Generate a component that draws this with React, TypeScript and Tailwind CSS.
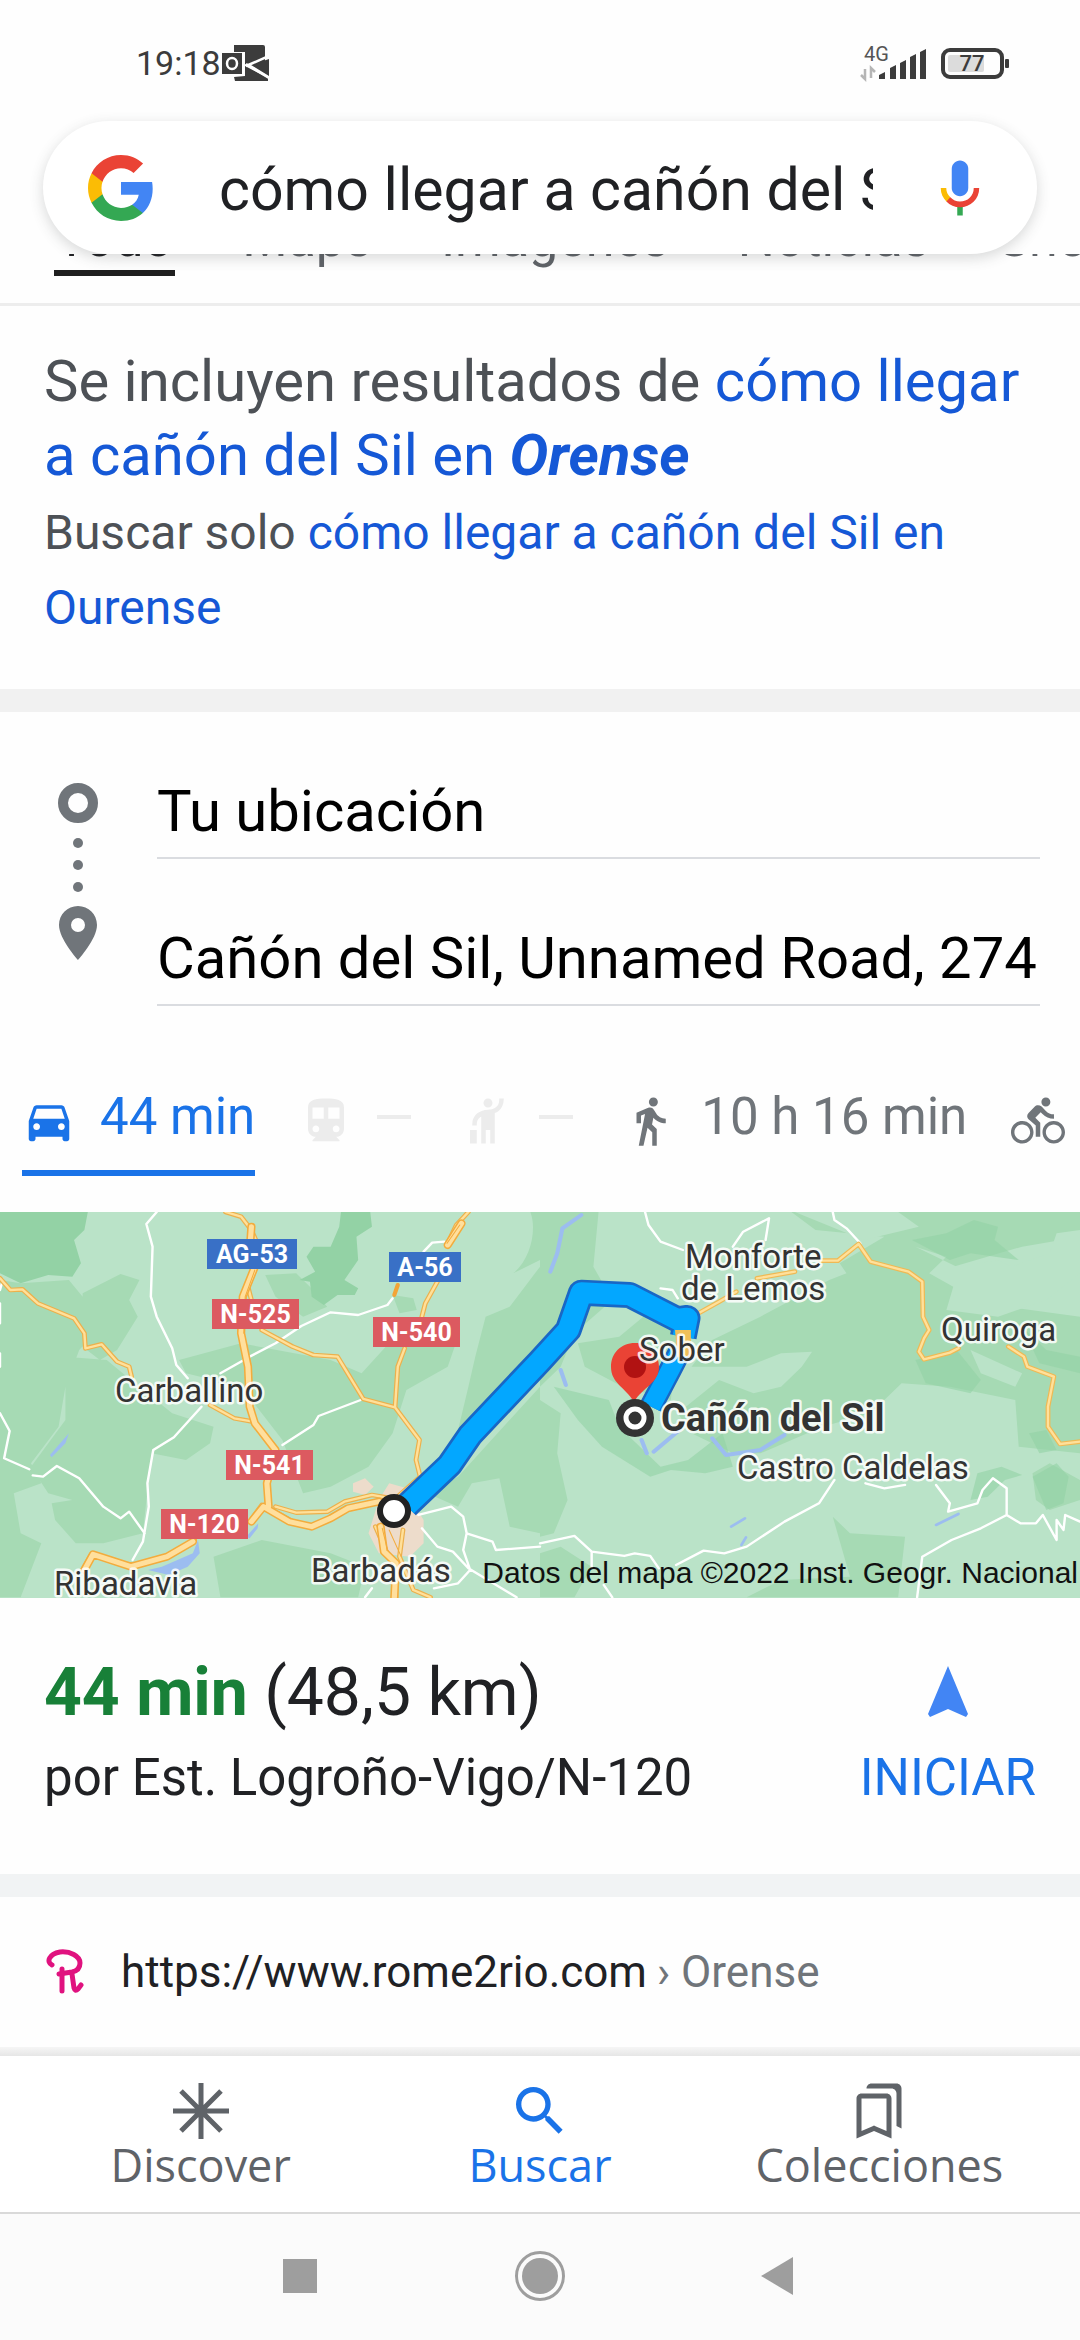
import type { ReactNode } from "react";
import {
  MdDirectionsBike,
  MdDirectionsCar,
  MdDirectionsTransit,
  MdDirectionsWalk,
  MdHail,
  MdOutlineBookmarks,
  MdSearch,
} from "react-icons/md";

function StatusBar() {
  return (
    <div className="flex h-[121px] items-center justify-between pt-1 pr-[70px] pl-[136px] text-[#3c3c3c]">
      <div className="flex items-center">
        <span className="text-[34px] leading-10">19:18</span>
        <svg className="h-[38px] w-[48px]" viewBox="0 0 48 38" aria-hidden="true">
          <path d="M13 1h29q2 0 2 2v17L26 21l-2-1V8H13z" fill="#3c3c3c" />
          <path d="M1 9h20v21H1z" fill="#3c3c3c" />
          <ellipse cx="11" cy="19.500" rx="5" ry="5.500" fill="none" stroke="#fff" strokeWidth="2.500" />
          <path d="M30 21l18-6v17z" fill="#3c3c3c" />
          <path d="M13 33l11-1V22l23 12v3H14z" fill="#3c3c3c" />
          <path d="M25 22l23-10M25 20l23 14" stroke="#fff" strokeWidth="2.500" />
          <path d="M22 8v23H13" fill="none" stroke="#fff" strokeWidth="2" />
        </svg>
      </div>
      <svg className="h-[40px] w-[150px]" viewBox="0 0 150 40" aria-label="4G, batería 77">
        <text x="4" y="18" fontSize="20" fill="#555" fontFamily="Roboto, sans-serif">4G</text>
        <path d="M5 26v10l-4-4M11 35V25l4 4" fill="none" stroke="#b5b5b5" strokeWidth="2.5" />
        <path d="M19 36v-4l6-3v7zM30 36V25l6-3v14zM40 36V20l6-3v19zM50 36V14l6-3v25zM60 36V9l6-3v30z" fill="#3c3c3c" />
        <rect x="83" y="7" width="59" height="27" rx="7" fill="none" stroke="#3c3c3c" strokeWidth="4" />
        <rect x="88" y="12" width="36" height="17" rx="2" fill="#dcdcdc" />
        <rect x="145" y="16" width="4" height="9" rx="1" fill="#3c3c3c" />
        <text x="112" y="28" textAnchor="middle" fontSize="22" fontWeight="500" fill="#3c3c3c" fontFamily="Roboto, sans-serif">77</text>
      </svg>
    </div>
  );
}

function GoogleLogo() {
  return (
    <svg className="size-[72px] shrink-0" viewBox="0 0 24 24" aria-label="Google">
      <path fill="#4285f4" d="M22.56 12.25c0-.78-.07-1.53-.2-2.25H12v4.26h5.92c-.26 1.37-1.04 2.53-2.21 3.31v2.77h3.57c2.08-1.92 3.28-4.74 3.28-8.09z" />
      <path fill="#34a853" d="M12 23c2.97 0 5.46-.98 7.28-2.66l-3.57-2.77c-.98.66-2.23 1.06-3.71 1.06-2.86 0-5.29-1.93-6.16-4.53H2.18v2.84C3.99 20.53 7.7 23 12 23z" />
      <path fill="#fbbc05" d="M5.84 14.09c-.22-.66-.35-1.36-.35-2.09s.13-1.43.35-2.09V7.07H2.18C1.43 8.55 1 10.22 1 12s.43 3.45 1.18 4.93l3.66-2.84z" />
      <path fill="#ea4335" d="M12 5.38c1.62 0 3.06.56 4.21 1.64l3.15-3.15C17.45 2.09 14.97 1 12 1 7.7 1 3.99 3.47 2.18 7.07l3.66 2.84c.87-2.6 3.3-4.53 6.16-4.53z" />
    </svg>
  );
}

function MicIcon() {
  return (
    <svg className="size-[66px]" viewBox="0 0 24 24" aria-hidden="true">
      <path fill="#4285f4" d="M12 15c1.66 0 3-1.31 3-2.97V5.01C15 3.35 13.66 2 12 2S9 3.34 9 5.01v7.02C9 13.69 10.34 15 12 15z" />
      <path fill="#34a853" d="M11 18.08h2V22h-2z" />
      <path fill="#fbbc05" d="M7.05 16.87C5.78 15.54 5 14.04 5 12h2c0 1.45.56 2.42 1.47 3.38v.32l-1.15 1.18z" />
      <path fill="#ea4335" d="M12 16.93a4.97 5.25 0 0 1-3.54-1.55l-1.41 1.49C8.31 18.21 10.07 19 12 19c3.87 0 6.99-2.92 6.99-7H17c0 2.92-2.24 4.93-5 4.93z" />
    </svg>
  );
}

function SearchBar() {
  return (
    <form
      className="mx-[43px] flex h-[133px] items-center rounded-full bg-white pr-[44px] pl-[42px] shadow-[0_4px_14px_rgba(60,64,67,0.2)]"
      onSubmit={(e) => e.preventDefault()}
    >
      <GoogleLogo />
      <input
        aria-label="Buscar"
        className="mr-[54px] ml-[62px] min-w-0 flex-1 bg-transparent pt-1.5 text-[59px] text-[#202124] outline-none"
        defaultValue="cómo llegar a cañón del Sil en Ourense"
      />
      <button type="button" aria-label="Búsqueda por voz">
        <MicIcon />
      </button>
    </form>
  );
}

function ResultTabs() {
  return (
    <nav className="-mt-[44px] flex gap-[65px] overflow-hidden border-b-3 border-[#ededed] pb-[27px] pl-[54px] text-[52px] leading-[58px] whitespace-nowrap text-[#5f6368]">
      <a href="#todo" className="border-b-6 border-[#1f1f1f] px-[2px] pb-[2px] text-[#202124]">Todo</a>
      <a href="#maps" className="border-b-6 border-transparent px-[2px] pb-[2px]">Maps</a>
      <a href="#imagenes" className="border-b-6 border-transparent px-[2px] pb-[2px]">Imágenes</a>
      <a href="#noticias" className="border-b-6 border-transparent px-[2px] pb-[2px]">Noticias</a>
      <a href="#shopping" className="border-b-6 border-transparent px-[2px] pb-[2px]">Shopping</a>
    </nav>
  );
}

function Spelling() {
  return (
    <section className="px-[44px] pt-[38px] pb-[44px] text-[#4d5156]">
      <p className="text-[58px] leading-[74px]">
        Se incluyen resultados de{" "}
        <a href="#orense" className="text-[#1558d6]">
          cómo llegar a cañón del Sil en <b className="italic">Orense</b>
        </a>
      </p>
      <p className="mt-[3px] text-[48px] leading-[75px]">
        Buscar solo{" "}
        <a href="#ourense" className="text-[#1558d6]">
          cómo llegar a cañón del Sil en Ourense
        </a>
      </p>
    </section>
  );
}

function DirectionsForm() {
  return (
    <section className="flex pt-[53px] pr-[40px] pl-[58px]">
      <svg className="mt-[18px] mr-[59px] h-[178px] w-[40px] shrink-0" viewBox="0 0 40 178" fill="#70757a" aria-hidden="true">
        <circle cx="20" cy="20" r="15" fill="none" stroke="#70757a" strokeWidth="10" />
        <circle cx="20" cy="60" r="5" />
        <circle cx="20" cy="82" r="5" />
        <circle cx="20" cy="104" r="5" />
        <path d="M20 123c-10.500 0-19 8.500-19 19 0 14 19 35 19 35s19-21 19-35c0-10.500-8.500-19-19-19zm0 26a7 7 0 1 1 0-14 7 7 0 0 1 0 14z" />
      </svg>
      <div className="flex min-w-0 flex-1 flex-col gap-[53px]">
        <input
          aria-label="Origen"
          className="h-[94px] w-full border-b-2 border-[#dadce0] text-[58px] text-black outline-none"
          defaultValue="Tu ubicación"
        />
        <input
          aria-label="Destino"
          className="h-[94px] w-full border-b-2 border-[#dadce0] text-[58px] text-black outline-none"
          defaultValue="Cañón del Sil, Unnamed Road, 274"
        />
      </div>
    </section>
  );
}

function ModeTab({ icon, label, time, className }: { icon: ReactNode; label: string; time?: string; className: string }) {
  return (
    <button type="button" aria-label={label} className={className}>
      {icon}
      {time ? <span className="pb-2">{time}</span> : <span className="mr-[6px] mb-2 h-[4px] w-[34px] bg-current" />}
    </button>
  );
}

function TravelModes() {
  return (
    <div className="mt-[66px] mb-[36px] flex gap-[44px] overflow-hidden pl-[22px] text-[51px] leading-[60px] whitespace-nowrap">
      <ModeTab label="Coche, 44 min" time="44 min" className="flex h-[104px] shrink-0 items-center gap-[24px] border-b-6 border-[#1a73e8] text-[#1a73e8]" icon={<MdDirectionsCar className="size-[54px]" />} />
      <ModeTab label="Transporte público" className="flex h-[104px] shrink-0 items-center gap-[24px] border-b-6 border-transparent text-[#ececec]" icon={<MdDirectionsTransit className="size-[54px]" />} />
      <ModeTab label="Taxi" className="flex h-[104px] shrink-0 items-center gap-[24px] border-b-6 border-transparent text-[#ececec]" icon={<MdHail className="size-[54px]" />} />
      <ModeTab label="A pie, 10 h 16 min" time="10 h 16 min" className="flex h-[104px] shrink-0 items-center gap-[24px] border-b-6 border-transparent text-[#70757a]" icon={<MdDirectionsWalk className="size-[54px]" />} />
      <button type="button" aria-label="Bicicleta" className="flex h-[104px] shrink-0 items-center border-b-6 border-transparent text-[#70757a]">
        <MdDirectionsBike className="size-[54px]" />
      </button>
    </div>
  );
}

const shields = [
  { name: "AG-53", x: 207, y: 27, w: 90, fill: "#3970c6" },
  { name: "A-56", x: 389, y: 40, w: 72, fill: "#3970c6" },
  { name: "N-525", x: 212, y: 87, w: 87, fill: "#dc5a60" },
  { name: "N-540", x: 373, y: 105, w: 87, fill: "#dc5a60" },
  { name: "N-541", x: 226, y: 238, w: 87, fill: "#dc5a60" },
  { name: "N-120", x: 161, y: 297, w: 87, fill: "#dc5a60" },
];

const places = [
  { name: "Carballino", x: 115, y: 190 },
  { name: "Ribadavia", x: 54, y: 383 },
  { name: "Barbadás", x: 311, y: 370 },
  { name: "Monforte", x: 685, y: 56 },
  { name: "de Lemos", x: 681, y: 88 },
  { name: "Sober", x: 639, y: 149 },
  { name: "Quiroga", x: 941, y: 129 },
  { name: "Castro Caldelas", x: 737, y: 267 },
];

const westWhiteRoads =
  "M455 36L425 72L443 140L438 290L455 350L500 445L512 495L545 535M1290 125L1255 128L1230 155M1140 295L1125 315L1040 345L960 337L875 378L800 430L725 470L640 520M0 640L28 693L12 775L85 808M95 826L125 830L165 798L230 835L300 920L350 955L375 935L420 1000M585 620L505 712L445 750L428 850L432 920L415 1025L385 1080M1055 597L925 648L910 675L820 735M1215 945L1310 920L1345 950L1355 1000L1430 1025L1440 1050L1568 1040M1225 985L1270 1040L1315 1055L1360 1105L1500 1192M1355 1000L1345 1050L1365 1110L1330 1150L1260 1165M1080 1165L1060 1192M0 270L8 240M0 310v60M0 460v40";
const westYellowRoads =
  "M0 235L30 270L65 268L110 310L215 355L245 400L248 445L295 433L340 485L375 500L382 530M655 36L700 50L730 90L745 125M740 210L720 260L735 320M760 390L850 440L910 465L980 470L1055 597L1147 622L1155 500L1175 445M1360 36L1325 75L1300 130M1270 245L1235 310L1225 350M1147 622L1218 720L1208 780L1220 830L1160 885M610 615L680 655L735 665M240 1110L265 1063L380 1100L480 1070L565 1020M725 965L760 915L790 930L860 970L910 980L1010 925L1110 905M800 920L860 938L950 935L1000 905L1080 885L1120 892M1090 980L1120 1050L1150 1110L1150 1192M1170 990L1160 1070L1200 1170L1250 1192";
const westMotorways =
  "M730 80L725 150L740 200L705 290L700 400L720 500L725 620L740 670L800 750L775 850L780 920M245 1110L270 1063L380 1100L485 1070L560 1025M730 965L765 920L840 965L905 980L960 955L1010 925L1100 905M1340 70L1300 135M1105 980L1115 1055L1150 1090L1145 1192";
const eastWhiteRoads =
  "M305 36L315 75L350 125L415 150M560 140L590 95L665 55L655 120M850 36L855 60L890 85L930 130M350 265L385 270L400 295M0 1030L100 1008L150 1055L245 1068L275 1060L320 1068L345 1105M150 1055L150 1100M185 1155L210 1192M395 1095L475 1052L535 1060L600 1040L710 965L810 910L855 840M945 850L1000 865L1060 855M1150 855L1190 910L1185 935L1270 910L1285 870L1315 835L1355 865L1355 945L1395 970L1440 970L1460 945L1500 1020L1500 960L1520 990L1525 945L1568 965M1355 945L1280 985L1195 1020L1110 1070L1095 1192";
const eastYellowRoads =
  "M460 340L520 305L570 275M630 235L740 215M815 182L865 182L925 132L960 185L1070 215L1110 245L1112 350L1130 390L1115 415L1100 455L1115 478L1190 458L1215 445M1360 440L1405 470L1415 500L1492 530L1475 620L1475 680L1510 732L1568 725";
const routeLine = "M1180 918L1305 795L1365 705L1568 483L1650 390L1688 278L1828 285L1966 358L1995 354L1984 410";

function RouteMap() {
  return (
    <svg className="block h-auto w-full" viewBox="0 0 1080 386" fontFamily="Roboto, sans-serif" role="img" aria-label="Mapa de la ruta">
      <rect width="1080" height="386" fill="#bae3c8" />
      {/* West half of the terrain and roads */}
      <g transform="scale(0.3444 0.3333) translate(0 -36)" fill="none" strokeLinejoin="round" strokeLinecap="round">
        <path fill="#a6dab4" d="M0 240L60 250L200 240L240 290L250 340L300 370L230 450L190 560L170 680L90 790L120 850L40 880L60 1000L120 1030L60 1192L0 1192zM240 280L350 222L405 240L375 300L400 350L340 450L290 480L240 440zM190 470L310 480L380 540L500 640L620 680L610 730L540 780L440 760L430 850L415 1000L300 1030L220 1030L160 960L150 910L210 900L140 880L90 800L190 660zM770 225L860 220L900 260L950 320L880 350L800 290zM520 480L700 430L960 480L1050 520L1120 440L1260 420L1320 440L1300 500L1180 570L1140 700L1070 800L960 860L880 880L820 720L700 560L540 520zM1140 285L1200 295L1210 330L1160 340zM1568 200L1480 320L1410 350L1380 470L1360 560L1330 690L1568 500zM1568 560L1330 830L1240 880L1330 920L1370 850L1450 835L1480 980L1568 1000zM640 1192L620 1070L760 1020L960 1060L1060 1100L1040 1192zM1540 36C1560 90 1540 180 1490 220L1568 180V36z" />
        <path fill="#93d2a5" d="M0 36H255L245 90L215 120L235 190L210 230L140 225L60 250L0 220zM990 36H1075L1080 80L1035 110L1040 180L1000 240L1040 265L1030 285L980 285L940 315L905 290L900 245L870 240L915 215L890 170L910 140L960 140L985 80z" />
        <path fill="#9cbdf0" d="M430 1110L470 1100L560 1060L575 1020L580 1060L545 1100L490 1125zM715 1010L750 970L748 985L725 1015zM145 765L200 700L190 730L150 772z" />
        <path fill="#eddccb" d="M1025 850L1060 835L1085 860L1060 885L1025 875zM1130 850L1200 870L1200 910L1230 960V1030L1190 1070L1100 1060L1070 1000L1100 900z" />
        <path stroke="#fff" strokeWidth="7" d={westWhiteRoads} />
        <path stroke="#ecb04c" strokeWidth="14" d={westYellowRoads} />
        <path stroke="#ffe09a" strokeWidth="7" d={westYellowRoads} />
        <path stroke="#f3ac3d" strokeWidth="24" d={westMotorways} />
        <path stroke="#ffdf9d" strokeWidth="15" d={westMotorways} />
        <path stroke="#f3ac3d" strokeWidth="3" d="M740 210L712 290L708 400M1335 75L1298 130M1110 985L1125 1050M1130 990L1165 1070" />
        <path stroke="#f3a436" strokeWidth="12" d="M1155 255L1145 285" />
      </g>
      {/* East half of the terrain and roads */}
      <g transform="translate(540 0) scale(0.3444 0.3333) translate(0 -36)" fill="none" strokeLinejoin="round" strokeLinecap="round">
        <path fill="#a6dab4" d="M0 36H170L155 200L210 300L100 400L60 500L0 560zM0 600L60 640L50 760L80 900L40 1000L0 1010zM730 36H1568V110L1400 140L1200 200L1210 300L1568 350V760L1390 740L1380 600L1190 560L1050 550L960 640L820 680L640 760L560 760L440 700L400 640L520 540L620 580L700 560L760 500L790 455L700 460L600 500L440 500L500 420L640 350L840 240L890 220L870 190L1000 110L800 90zM300 350L400 400L380 600L240 560L130 500L110 430L230 410zM0 1060L60 1040L150 1100L100 1192H0zM850 950L900 1000L1060 1010L1040 1192H600L700 1140L900 1130zM1568 840L1480 790L1430 820L1440 900L1480 930L1568 900z" />
        <path fill="#bae3c8" d="M1090 140L1180 170L1130 220L1200 260L1180 330L1330 350L1470 300L1568 220V90L1500 100L1480 160L1370 200L1330 180L1210 200zM1250 450L1400 520L1380 560L1280 520zM740 36H1040L1100 80L940 120z" />
        <path fill="#93d2a5" fillOpacity="0.6" d="M1080 120L1180 100L1260 60L1330 80L1320 120L1390 180L1250 160L1190 180zM40 560L200 600L230 680L350 800L430 780L530 700L560 800L480 820L380 810L320 830L180 740L110 660zM1090 480L1210 450L1280 540L1250 580L1120 550zM1270 820L1340 800L1400 825L1350 840L1300 890L1250 900zM1430 830L1500 790L1535 830L1520 910L1470 930zM1420 700L1470 690L1500 750L1450 760zM1400 380L1470 450L1568 470L1568 520L1450 490z" />
        <path stroke="#9cbdf0" strokeWidth="12" d="M120 45L65 85L50 160L30 215M330 755L405 690M500 715L540 765L640 750L710 705M60 510L75 555M295 720L310 760" />
        <path stroke="#9cbdf0" strokeWidth="8" d="M555 980L595 955M585 1035L598 1012M1150 975L1215 942" />
        <path stroke="#fff" strokeWidth="7" d={eastWhiteRoads} />
        <path stroke="#efb954" strokeWidth="14" d={eastYellowRoads} />
        <path stroke="#ffe09a" strokeWidth="7" d={eastYellowRoads} />
        <path stroke="#1967c5" strokeWidth="68" strokeLinecap="butt" d="M408 450L378 510L322 620" />
        <path stroke="#03a7ff" strokeWidth="54" strokeLinecap="butt" d="M408 450L378 510L322 620" />
      </g>
      <g transform="scale(0.3444 0.3333) translate(0 -36)" fill="none" strokeLinejoin="round">
        <path stroke="#1967c5" strokeWidth="78" d={routeLine} />
        <path stroke="#03a7ff" strokeWidth="62" d={routeLine} />
        <path fill="#f0c05a" d="M1960 390h46v80h-40z" />
      </g>
      <circle cx="394" cy="299" r="14" fill="#fff" stroke="#222" strokeWidth="6" />
      <path d="M635 131c-14 0-24 10-24 24 0 16 14 20 23 35 9-15 25-19 25-35 0-14-10-24-24-24z" fill="#ea4335" />
      <circle cx="635" cy="155" r="11" fill="#b11212" />
      <circle cx="635" cy="206" r="19" fill="#333" />
      <circle cx="635" cy="206" r="9" fill="#333" stroke="#fff" strokeWidth="5" />
      {shields.map((s) => (
        <g key={s.name}>
          <rect x={s.x} y={s.y} width={s.w} height="30" fill={s.fill} />
          <text x={s.x + s.w / 2} y={s.y + 24} textAnchor="middle" fontSize="25" fontWeight="700" fill="#fff">{s.name}</text>
        </g>
      ))}
      <g fontSize="33" fill="#333" stroke="#fff" strokeOpacity="0.85" strokeWidth="5" strokeLinejoin="round" paintOrder="stroke">
        {places.map((p) => (
          <text key={p.name} x={p.x} y={p.y}>{p.name}</text>
        ))}
        <text x="661" y="219" fontSize="38" fontWeight="700">Cañón del Sil</text>
      </g>
      <text x="1078" y="371" textAnchor="end" fontSize="30" fill="#111" fontFamily="Liberation Sans, Arial, sans-serif">
        Datos del mapa ©2022 Inst. Geogr. Nacional
      </text>
    </svg>
  );
}

function RouteSummary() {
  return (
    <section className="flex justify-between pt-[52px] pr-[44px] pb-[54px] pl-[44px] text-[#202124]">
      <div className="leading-[85px]">
        <p className="text-[66px]">
          <b className="text-[#188038]">44 min</b> (48,5 km)
        </p>
        <p className="text-[51px]">por Est. Logroño-Vigo/N-120</p>
      </div>
      <button type="button" className="flex flex-col items-center text-[51px] leading-[85px] text-[#1a73e8]">
        <svg className="mt-[16px] mb-[18px] h-[51px] w-[40px]" viewBox="0 0 40 51" aria-hidden="true">
          <path d="M20 0L40 48l-2 3-18-8-18 8-2-3z" fill="#4285f4" />
        </svg>
        INICIAR
      </button>
    </section>
  );
}

function WebResult() {
  return (
    <a href="#rome2rio" className="flex h-[150px] items-center pl-[46px] text-[44px] text-[#202124]">
      <svg className="mr-[37px] h-[46px] w-[38px]" viewBox="0 0 38 46" fill="none" stroke="#e0127f" strokeWidth="5" strokeLinecap="round" strokeLinejoin="round" aria-hidden="true">
        <path d="M6 16C0 13 3 5 14 3c10-1 20 4 20 11 0 5-3 8-8 9l-13 2" />
        <path d="M16 20v22M26 25l2 14q1 4 4 1l3-4" />
      </svg>
      <span>https://www.rome2rio.com</span>
      <span className="pl-[10px] text-[#70757a]">› Orense</span>
    </a>
  );
}

function BottomNav() {
  return (
    <nav className="grid grid-cols-3 border-b-2 border-b-[#d9d9d9] bg-white px-[31px] pt-[23px] pb-[25px] font-['Open_Sans',sans-serif] text-[45px] leading-[44px] font-medium text-[#5f6368]">
      <button type="button" className="flex flex-col items-center">
        <svg className="size-[64px]" viewBox="0 0 64 64" stroke="currentColor" strokeWidth="5" aria-hidden="true">
          <path d="M32 4v56M4 32h56M12 12l40 40M52 12L12 52" />
        </svg>
        Discover
      </button>
      <button type="button" className="flex flex-col items-center text-[#1a73e8]">
        <MdSearch className="size-[64px]" />
        Buscar
      </button>
      <button type="button" className="flex flex-col items-center">
        <span className="flex h-[64px] items-center">
          <MdOutlineBookmarks className="size-[60px]" />
        </span>
        Colecciones
      </button>
    </nav>
  );
}

function SystemNav() {
  return (
    <div className="bg-[#fbfbfb] pb-[3px]">
      <div className="mx-auto grid h-[124px] w-2/3 grid-cols-3 place-items-center">
        <button type="button" aria-label="Recientes" className="size-[34px] bg-[#9e9e9e]" />
        <button type="button" aria-label="Inicio" className="flex size-[50px] items-center justify-center rounded-full border-3 border-[#9e9e9e]">
          <span className="size-[36px] rounded-full bg-[#9e9e9e]" />
        </button>
        <button type="button" aria-label="Atrás">
          <svg className="h-[38px] w-[38px]" viewBox="0 0 38 38" aria-hidden="true">
            <path d="M32 0v38L0 19z" fill="#9e9e9e" />
          </svg>
        </button>
      </div>
    </div>
  );
}

export default function App() {
  return (
    <div className="flex min-h-screen flex-col overflow-x-hidden bg-[#fefefe] font-[Roboto,sans-serif]">
      <header>
        <div className="relative z-10 bg-[#fefefe]">
          <StatusBar />
          <SearchBar />
        </div>
        <ResultTabs />
      </header>
      <main>
        <Spelling />
        <div className="h-[23px] bg-[#f1f1f1]" />
        <DirectionsForm />
        <TravelModes />
        <RouteMap />
        <RouteSummary />
        <div className="h-[23px] bg-[#f1f3f4]" />
        <WebResult />
      </main>
      <footer className="mt-auto">
        <div className="h-[9px] bg-linear-to-b from-[#f6f6f6] to-[#e6e6e6]" />
        <BottomNav />
        <SystemNav />
      </footer>
    </div>
  );
}
